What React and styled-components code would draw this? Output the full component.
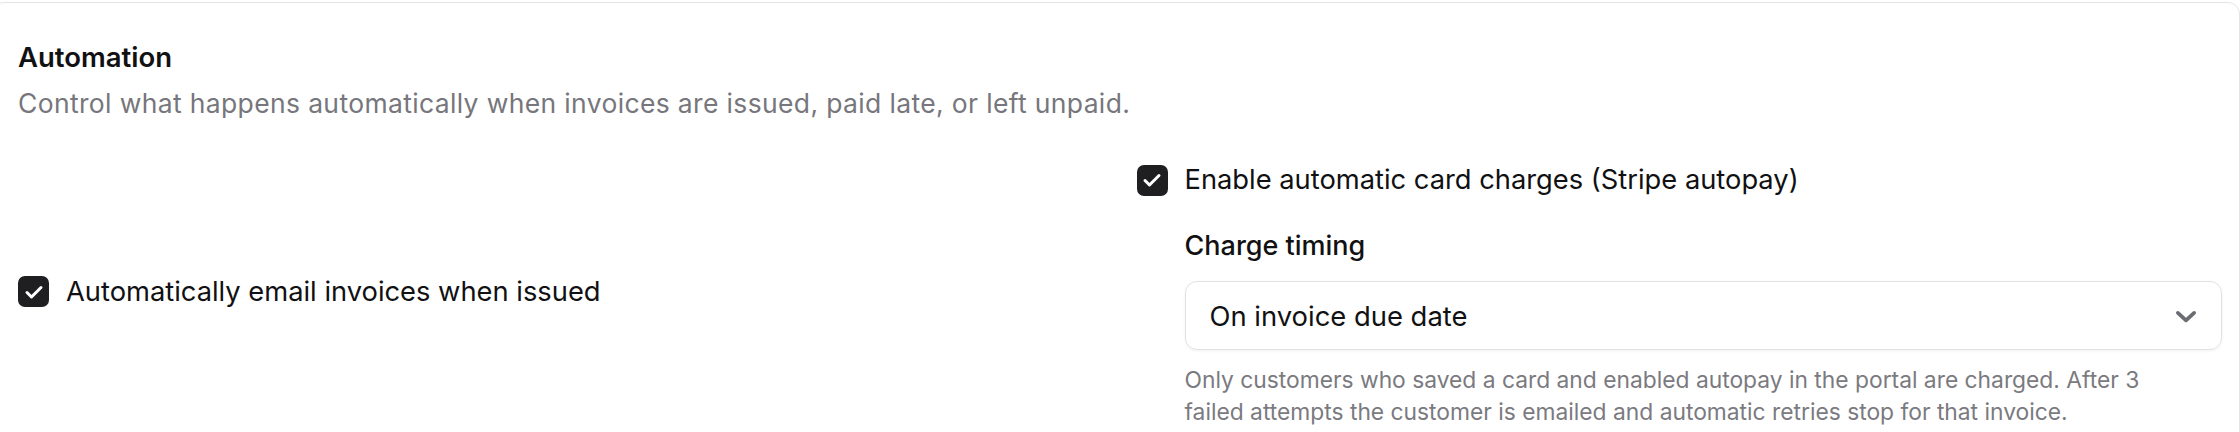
import React from "react";
import styled, { createGlobalStyle } from "styled-components";

const GlobalStyle = createGlobalStyle`
  html, body {
    margin: 0;
    padding: 0;
    background: #ffffff;
    overflow: hidden;
  }
  body {
    font-family: Inter, "Noto Sans", "Liberation Sans", sans-serif;
    color: #111113;
    -webkit-font-smoothing: antialiased;
  }
`;

const Card = styled.section`
  margin: 2px 0 0 -8px;
  padding: 36px 17px 40px 25px;
  border: 1px solid #e4e4e7;
  border-radius: 12px;
  background: #ffffff;
`;

const Title = styled.h2`
  margin: 0;
  font-size: 27.5px;
  line-height: 36px;
  font-weight: 600;
  color: #111113;
`;

const Description = styled.p`
  margin: 10px 0 0;
  font-size: 26.5px;
  letter-spacing: 0.35px;
  line-height: 37px;
  color: #76767c;
`;

const Columns = styled.div`
  display: grid;
  grid-template-columns: 1fr 1fr;
  column-gap: 33px;
  align-items: center;
  margin-top: 40px;
`;

const Column = styled.div`
  display: flex;
  flex-direction: column;
  padding-bottom: ${(p) => (p.$lift ? "6px" : "0")};
`;

const CheckRow = styled.label`
  display: flex;
  align-items: center;
  gap: 17px;
  font-size: 27.3px;
  line-height: 36px;
  color: #111113;
`;

const Box = styled.span`
  flex: none;
  width: 31px;
  height: 31px;
  border-radius: 7px;
  background: #1f1f22;
  display: flex;
  align-items: center;
  justify-content: center;
`;

const Nested = styled.div`
  display: flex;
  flex-direction: column;
  padding-left: 48px;
  margin-top: 30px;
`;

const FieldLabel = styled.div`
  font-size: 27px;
  line-height: 36px;
  font-weight: 500;
  color: #111113;
`;

const Select = styled.div`
  margin-top: 17px;
  height: 69px;
  box-sizing: border-box;
  border: 1.5px solid #e2e2e5;
  border-radius: 12px;
  box-shadow: 0 1px 3px rgba(0, 0, 0, 0.06);
  display: flex;
  align-items: center;
  justify-content: space-between;
  padding: 0 20px 0 24px;
  font-size: 27.4px;
  color: #111113;
`;

const Hint = styled.p`
  margin: 14px 0 0;
  padding-right: 60px;
  font-size: 22.8px;
  line-height: 31.5px;
  color: #7a7a80;
`;

const Check = () => (
  <svg width="24" height="24" viewBox="0 0 24 24" fill="none">
    <path d="M5 12.5l4.5 4.5L19 7.5" stroke="#ffffff" strokeWidth="3" strokeLinecap="round" strokeLinejoin="round" />
  </svg>
);

const Chevron = () => (
  <svg width="30" height="30" viewBox="0 0 24 24" fill="none">
    <path d="M5.5 9.5l6.5 6 6.5-6" stroke="#6b6b72" strokeWidth="3" strokeLinecap="round" strokeLinejoin="round" />
  </svg>
);

const Checkbox = ({ children }) => (
  <CheckRow>
    <Box><Check /></Box>
    {children}
  </CheckRow>
);

export default function App() {
  return (
    <>
      <GlobalStyle />
      <Card>
        <Title>Automation</Title>
        <Description>
          Control what happens automatically when invoices are issued, paid late, or left unpaid.
        </Description>

        <Columns>
          <Column $lift>
            <Checkbox>Automatically email invoices when issued</Checkbox>
          </Column>

          <Column>
            <Checkbox>Enable automatic card charges (Stripe autopay)</Checkbox>
            <Nested>
              <FieldLabel>Charge timing</FieldLabel>
              <Select>
                <span>On invoice due date</span>
                <Chevron />
              </Select>
              <Hint>
                Only customers who saved a card and enabled autopay in the portal are charged. After 3
                failed attempts the customer is emailed and automatic retries stop for that invoice.
              </Hint>
            </Nested>
          </Column>
        </Columns>
      </Card>
    </>
  );
}
